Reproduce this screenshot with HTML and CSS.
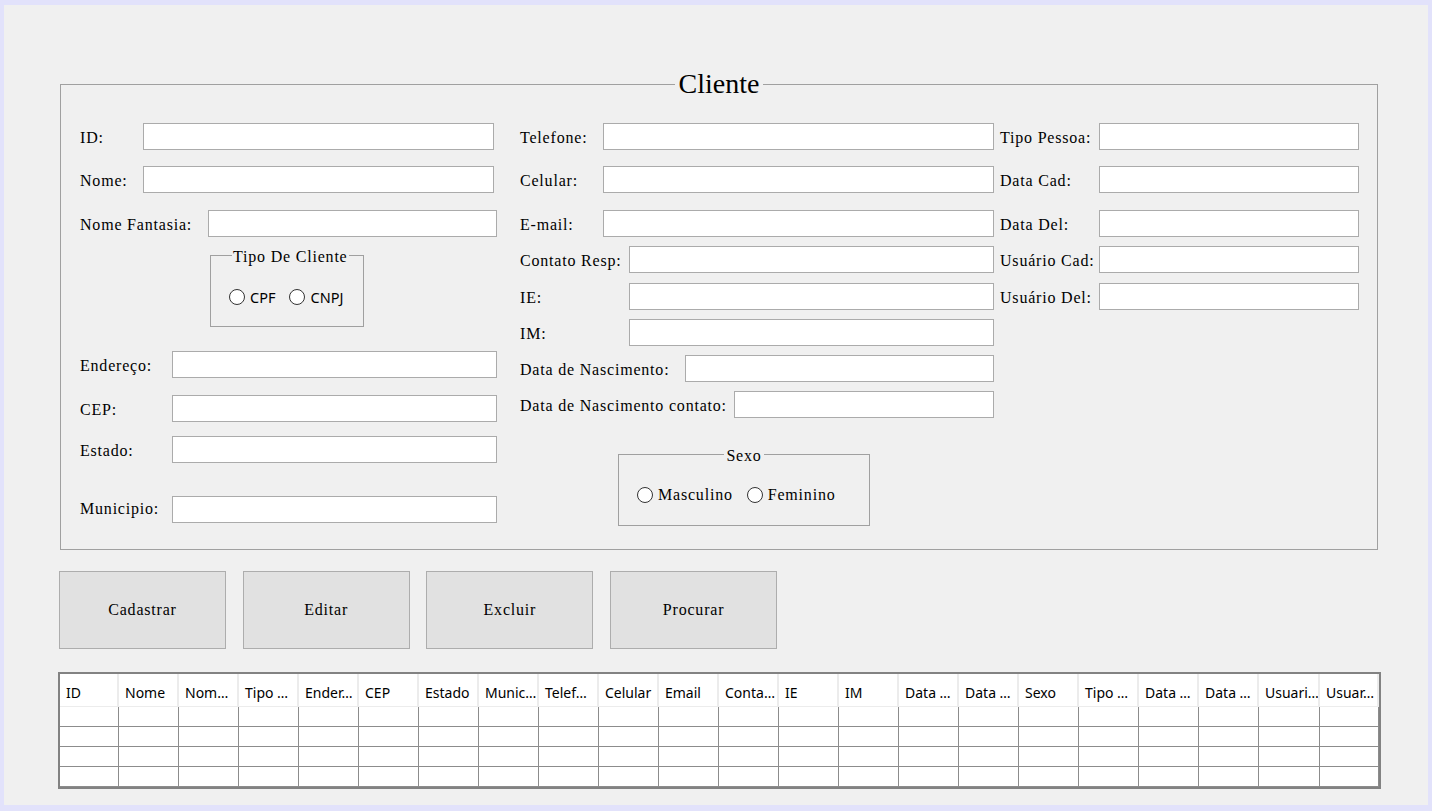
FILE: index.html
```html
<!DOCTYPE html>
<html lang="pt-BR">
<head>
<meta charset="utf-8">
<title>Cliente</title>
<link rel="stylesheet" href="styles.css">
</head>
<body>
<div class="window">
  <fieldset class="cliente">
    <legend class="cliente-title">Cliente</legend>
    <div class="fs-body">
      <div class="col col1">
        <div class="row w414"><label class="lbl lw63">ID:</label><input class="tb" type="text"></div>
        <div class="row w414 mt16"><label class="lbl lw63">Nome:</label><input class="tb" type="text"></div>
        <div class="row w417 mt17"><label class="lbl lw128">Nome Fantasia:</label><input class="tb" type="text"></div>
        <fieldset class="grp tipo">
          <legend>Tipo De Cliente</legend>
          <div class="grp-body">
            <span class="opt sans"><span class="circle"></span>CPF</span>
            <span class="opt sans"><span class="circle"></span>CNPJ</span>
          </div>
        </fieldset>
        <div class="row w417 mt24"><label class="lbl lw92">Endereço:</label><input class="tb" type="text"></div>
        <div class="row w417 mt17"><label class="lbl lw92">CEP:</label><input class="tb" type="text"></div>
        <div class="row w417 mt14"><label class="lbl lw92">Estado:</label><input class="tb" type="text"></div>
        <div class="row w417 mt33"><label class="lbl lw92 up">Municipio:</label><input class="tb" type="text"></div>
      </div>
      <div class="col col2">
        <div class="row w474"><label class="lbl lw83">Telefone:</label><input class="tb" type="text"></div>
        <div class="row w474 mt16"><label class="lbl lw83">Celular:</label><input class="tb" type="text"></div>
        <div class="row w474 mt17"><label class="lbl lw83">E-mail:</label><input class="tb" type="text"></div>
        <div class="row w474 mt9"><label class="lbl lw109">Contato Resp:</label><input class="tb" type="text"></div>
        <div class="row w474 mt10"><label class="lbl lw109">IE:</label><input class="tb" type="text"></div>
        <div class="row w474 mt9"><label class="lbl lw109">IM:</label><input class="tb" type="text"></div>
        <div class="row w474 mt9"><label class="lbl lw165">Data de Nascimento:</label><input class="tb" type="text"></div>
        <div class="row w474 mt9"><label class="lbl lw214">Data de Nascimento contato:</label><input class="tb" type="text"></div>
        <fieldset class="grp sexo">
          <legend>Sexo</legend>
          <div class="grp-body">
            <span class="opt serif"><span class="circle"></span>Masculino</span>
            <span class="opt serif"><span class="circle"></span>Feminino</span>
          </div>
        </fieldset>
      </div>
      <div class="col col3">
        <div class="row w359"><label class="lbl lw99">Tipo Pessoa:</label><input class="tb" type="text"></div>
        <div class="row w359 mt16"><label class="lbl lw99">Data Cad:</label><input class="tb" type="text"></div>
        <div class="row w359 mt17"><label class="lbl lw99">Data Del:</label><input class="tb" type="text"></div>
        <div class="row w359 mt9"><label class="lbl lw99">Usuário Cad:</label><input class="tb" type="text"></div>
        <div class="row w359 mt10"><label class="lbl lw99">Usuário Del:</label><input class="tb" type="text"></div>
      </div>
    </div>
  </fieldset>

  <div class="btns">
    <button class="btn" type="button">Cadastrar</button>
    <button class="btn" type="button">Editar</button>
    <button class="btn" type="button">Excluir</button>
    <button class="btn" type="button">Procurar</button>
  </div>

  <div class="dgv">
    <div class="th">ID</div><div class="th">Nome</div><div class="th">Nom…</div><div class="th">Tipo …</div><div class="th">Ender…</div><div class="th">CEP</div><div class="th">Estado</div><div class="th">Munic…</div><div class="th">Telef…</div><div class="th">Celular</div><div class="th">Email</div><div class="th">Conta…</div><div class="th">IE</div><div class="th">IM</div><div class="th">Data …</div><div class="th">Data …</div><div class="th">Sexo</div><div class="th">Tipo …</div><div class="th">Data …</div><div class="th">Data …</div><div class="th">Usuari…</div><div class="th">Usuar…</div>
    <div class="td"></div><div class="td"></div><div class="td"></div><div class="td"></div><div class="td"></div><div class="td"></div><div class="td"></div><div class="td"></div><div class="td"></div><div class="td"></div><div class="td"></div><div class="td"></div><div class="td"></div><div class="td"></div><div class="td"></div><div class="td"></div><div class="td"></div><div class="td"></div><div class="td"></div><div class="td"></div><div class="td"></div><div class="td"></div>
    <div class="td"></div><div class="td"></div><div class="td"></div><div class="td"></div><div class="td"></div><div class="td"></div><div class="td"></div><div class="td"></div><div class="td"></div><div class="td"></div><div class="td"></div><div class="td"></div><div class="td"></div><div class="td"></div><div class="td"></div><div class="td"></div><div class="td"></div><div class="td"></div><div class="td"></div><div class="td"></div><div class="td"></div><div class="td"></div>
    <div class="td"></div><div class="td"></div><div class="td"></div><div class="td"></div><div class="td"></div><div class="td"></div><div class="td"></div><div class="td"></div><div class="td"></div><div class="td"></div><div class="td"></div><div class="td"></div><div class="td"></div><div class="td"></div><div class="td"></div><div class="td"></div><div class="td"></div><div class="td"></div><div class="td"></div><div class="td"></div><div class="td"></div><div class="td"></div>
    <div class="td"></div><div class="td"></div><div class="td"></div><div class="td"></div><div class="td"></div><div class="td"></div><div class="td"></div><div class="td"></div><div class="td"></div><div class="td"></div><div class="td"></div><div class="td"></div><div class="td"></div><div class="td"></div><div class="td"></div><div class="td"></div><div class="td"></div><div class="td"></div><div class="td"></div><div class="td"></div><div class="td"></div><div class="td"></div>
  </div>
</div>
</body>
</html>
```

FILE: styles.css
```css
* { box-sizing: border-box; }
html, body { margin: 0; padding: 0; }
body {
  background: #e2e2fb;
  font-family: "Liberation Serif", "Times New Roman", serif;
  font-size: 16px;
  color: #000;
  width: 1432px;
  height: 811px;
  padding: 5px 4px 6px 4px;
  overflow: hidden;
}
.window {
  background: #f0f0f0;
  height: 800px;
  padding-top: 65px;
  overflow: hidden;
}
.cliente {
  margin: 0 0 0 56px;
  width: 1318px;
  border: 1px solid #a0a0a0;
  padding: 0;
  min-width: 0;
}
.cliente-title {
  margin: 0 auto;
  padding: 0 4px;
  font-size: 28px;
  line-height: 28px;
}
.fs-body {
  height: 451px;
  display: flex;
  padding: 25px 0 0 19px;
}
.col { display: flex; flex-direction: column; flex-shrink: 0; }
.col1 { width: 440px; }
.col2 { width: 480px; }
.col3 { width: 359px; }

.row { display: flex; align-items: center; height: 27px; flex-shrink: 0; }
.w414 { width: 414px; }
.w417 { width: 417px; }
.w474 { width: 474px; }
.w359 { width: 359px; }
.lw63 { width: 63px; }
.lw128 { width: 128px; }
.lw92 { width: 92px; }
.lw83 { width: 83px; }
.lw109 { width: 109px; }
.lw165 { width: 165px; }
.lw214 { width: 214px; }
.lw99 { width: 99px; }
.mt9 { margin-top: 9px; }
.mt10 { margin-top: 10px; }
.mt14 { margin-top: 14px; }
.mt16 { margin-top: 16px; }
.mt17 { margin-top: 17px; }
.mt24 { margin-top: 24px; }
.mt33 { margin-top: 33px; }

.lbl {
  flex-shrink: 0;
  letter-spacing: 0.8px;
  white-space: nowrap;
  line-height: 18px;
  padding-top: 2px;
}
.lbl.up { padding-top: 0; padding-bottom: 2px; }
.tb {
  flex: 1;
  min-width: 0;
  height: 27px;
  margin: 0;
  padding: 0 4px;
  border: 1px solid #ababab;
  border-radius: 0;
  background: #fff;
  font: inherit;
  outline: none;
}

.grp {
  border: 1px solid #a0a0a0;
  margin: 0;
  padding: 0;
  min-width: 0;
  flex-shrink: 0;
}
.grp legend {
  font-size: 16px;
  line-height: 18px;
  letter-spacing: 0.8px;
  padding: 4px 1px 0 1px;
}
.grp-body {
  height: 60px;
  display: flex;
  align-items: center;
}
.tipo { width: 154px; margin-top: 7px; margin-left: 130px; }
.tipo legend { margin-left: 21px; }
.tipo .grp-body { padding: 2px 0 0 18px; }
.sexo { width: 252px; margin-top: 25px; margin-left: 98px; }
.sexo legend { margin: 0 auto; padding: 4px 2px 0 2px; }
.sexo .grp-body { padding: 0 0 0 18px; }

.opt { display: flex; align-items: center; margin-right: 14px; white-space: nowrap; }
.opt.sans { font-family: "Noto Sans", sans-serif; font-size: 14.5px; }
.opt.serif { font-size: 16px; letter-spacing: 0.8px; }
.circle {
  width: 16px;
  height: 16px;
  border-radius: 50%;
  border: 1px solid #333;
  background: #fff;
  margin-right: 5px;
  flex-shrink: 0;
}

.btns {
  display: flex;
  gap: 16.7px;
  margin: 21px 0 0 55px;
}
.btn {
  width: 167px;
  height: 78px;
  border: 1px solid #adadad;
  border-radius: 0;
  background: #e1e1e1;
  font-family: "Liberation Serif", "Times New Roman", serif;
  font-size: 16px;
  letter-spacing: 0.8px;
  color: #000;
  padding: 0;
  margin: 0;
}

.dgv {
  margin: 23px 0 0 54px;
  width: 1323px;
  border: 2px solid #828282;
  background: #fff;
  display: grid;
  grid-template-columns: 59px repeat(19, 60px) 61px 59px;
  grid-template-rows: 33px repeat(4, 20px);
}
.th {
  border-right: 2px solid #ececec;
  border-bottom: 1px solid #ececec;
  font-family: "Noto Sans", sans-serif;
  font-size: 14px;
  padding: 4px 0 0 6px;
  display: flex;
  align-items: center;
  white-space: nowrap;
  overflow: hidden;
}
.td {
  border-right: 1px solid #8c8c8c;
  border-bottom: 1px solid #8c8c8c;
}
```
